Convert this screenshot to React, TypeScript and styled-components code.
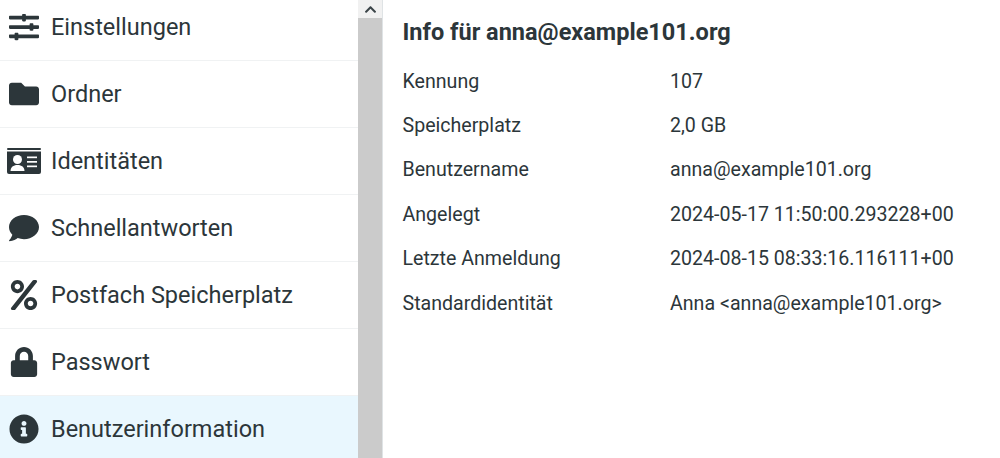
import React from 'react'
import styled, { createGlobalStyle } from 'styled-components'
import { FaSlidersH, FaFolder, FaComment, FaPercent, FaLock, FaInfoCircle, FaChevronUp } from 'react-icons/fa'

const GlobalStyle = createGlobalStyle`
  html, body {
    margin: 0;
    height: 100%;
    overflow: hidden;
    background: #fff;
    font-family: Roboto, "Liberation Sans", sans-serif;
    color: #2c363a;
  }
`

const Page = styled.div`
  display: flex;
  width: 1000px;
  height: 458px;
  overflow: hidden;
`

const Sidebar = styled.div`
  width: 358px;
  height: 458px;
  overflow: hidden;
  flex-shrink: 0;
`

// the list is scrolled down a little in the screenshot
const MenuList = styled.ul`
  list-style: none;
  margin: -6px 0 0;
  padding: 0;
`

const MenuItem = styled.li<{ $active?: boolean }>`
  display: flex;
  align-items: center;
  height: 66px;
  border-bottom: 1px solid #f0f2f3;
  background: ${props => (props.$active ? '#e9f7fe' : '#fff')};
  font-size: 23.5px;
  white-space: nowrap;
`

const IconSlot = styled.span`
  display: flex;
  justify-content: center;
  align-items: center;
  width: 48px;
  margin-right: 3px;
  flex-shrink: 0;
  font-size: 30px;
`

const Scrollbar = styled.div`
  width: 24px;
  flex-shrink: 0;
  background: #cbcbcb;
  border-right: 1px solid #dfe3e5;
`

const ScrollUp = styled.div`
  display: flex;
  justify-content: center;
  align-items: center;
  height: 18px;
  background: #f1f1f1;
  color: #3b4448;
  font-size: 13px;
`

const Content = styled.main`
  flex: 1;
  padding: 18px 20px 0 19.5px;
`

const Title = styled.h1`
  margin: 0 0 13px;
  font-size: 23.5px;
  line-height: 28px;
  font-weight: 700;
`

const InfoRow = styled.div`
  display: grid;
  grid-template-columns: 267.5px 1fr;
  height: 44.4px;
  align-items: center;
  font-size: 19.6px;
`

const IdCardIcon = () => (
  <svg width="34" height="26" viewBox="0 0 34 26" fill="currentColor">
    <rect x="0" y="0" width="34" height="2" rx="1" />
    <path d="M0 3.5h34V24a2 2 0 0 1-2 2H2a2 2 0 0 1-2-2z" />
    <circle cx="10.5" cy="11.5" r="4.5" fill="#fff" />
    <path d="M3.5 23c0-3.8 2.8-6 7-6s7 2.2 7 6z" fill="#fff" />
    <rect x="20" y="8.5" width="10" height="1.7" fill="#fff" />
    <rect x="20" y="13" width="10" height="1.7" fill="#fff" />
    <rect x="20" y="17.5" width="10" height="1.7" fill="#fff" />
  </svg>
)

const menu = [
  { label: 'Einstellungen', icon: <FaSlidersH /> },
  { label: 'Ordner', icon: <FaFolder /> },
  { label: 'Identitäten', icon: <IdCardIcon /> },
  { label: 'Schnellantworten', icon: <FaComment /> },
  { label: 'Postfach Speicherplatz', icon: <FaPercent /> },
  { label: 'Passwort', icon: <FaLock /> },
  { label: 'Benutzerinformation', icon: <FaInfoCircle />, active: true },
]

const info = [
  ['Kennung', '107'],
  ['Speicherplatz', '2,0 GB'],
  ['Benutzername', 'anna@example101.org'],
  ['Angelegt', '2024-05-17 11:50:00.293228+00'],
  ['Letzte Anmeldung', '2024-08-15 08:33:16.116111+00'],
  ['Standardidentität', 'Anna <anna@example101.org>'],
]

export default function App() {
  return (
    <Page>
      <GlobalStyle />
      <Sidebar>
        <MenuList>
          {menu.map(item => (
            <MenuItem key={item.label} $active={item.active}>
              <IconSlot>{item.icon}</IconSlot>
              {item.label}
            </MenuItem>
          ))}
        </MenuList>
      </Sidebar>
      <Scrollbar>
        <ScrollUp>
          <FaChevronUp />
        </ScrollUp>
      </Scrollbar>
      <Content>
        <Title>Info für anna@example101.org</Title>
        {info.map(([key, value]) => (
          <InfoRow key={key}>
            <span>{key}</span>
            <span>{value}</span>
          </InfoRow>
        ))}
      </Content>
    </Page>
  )
}
